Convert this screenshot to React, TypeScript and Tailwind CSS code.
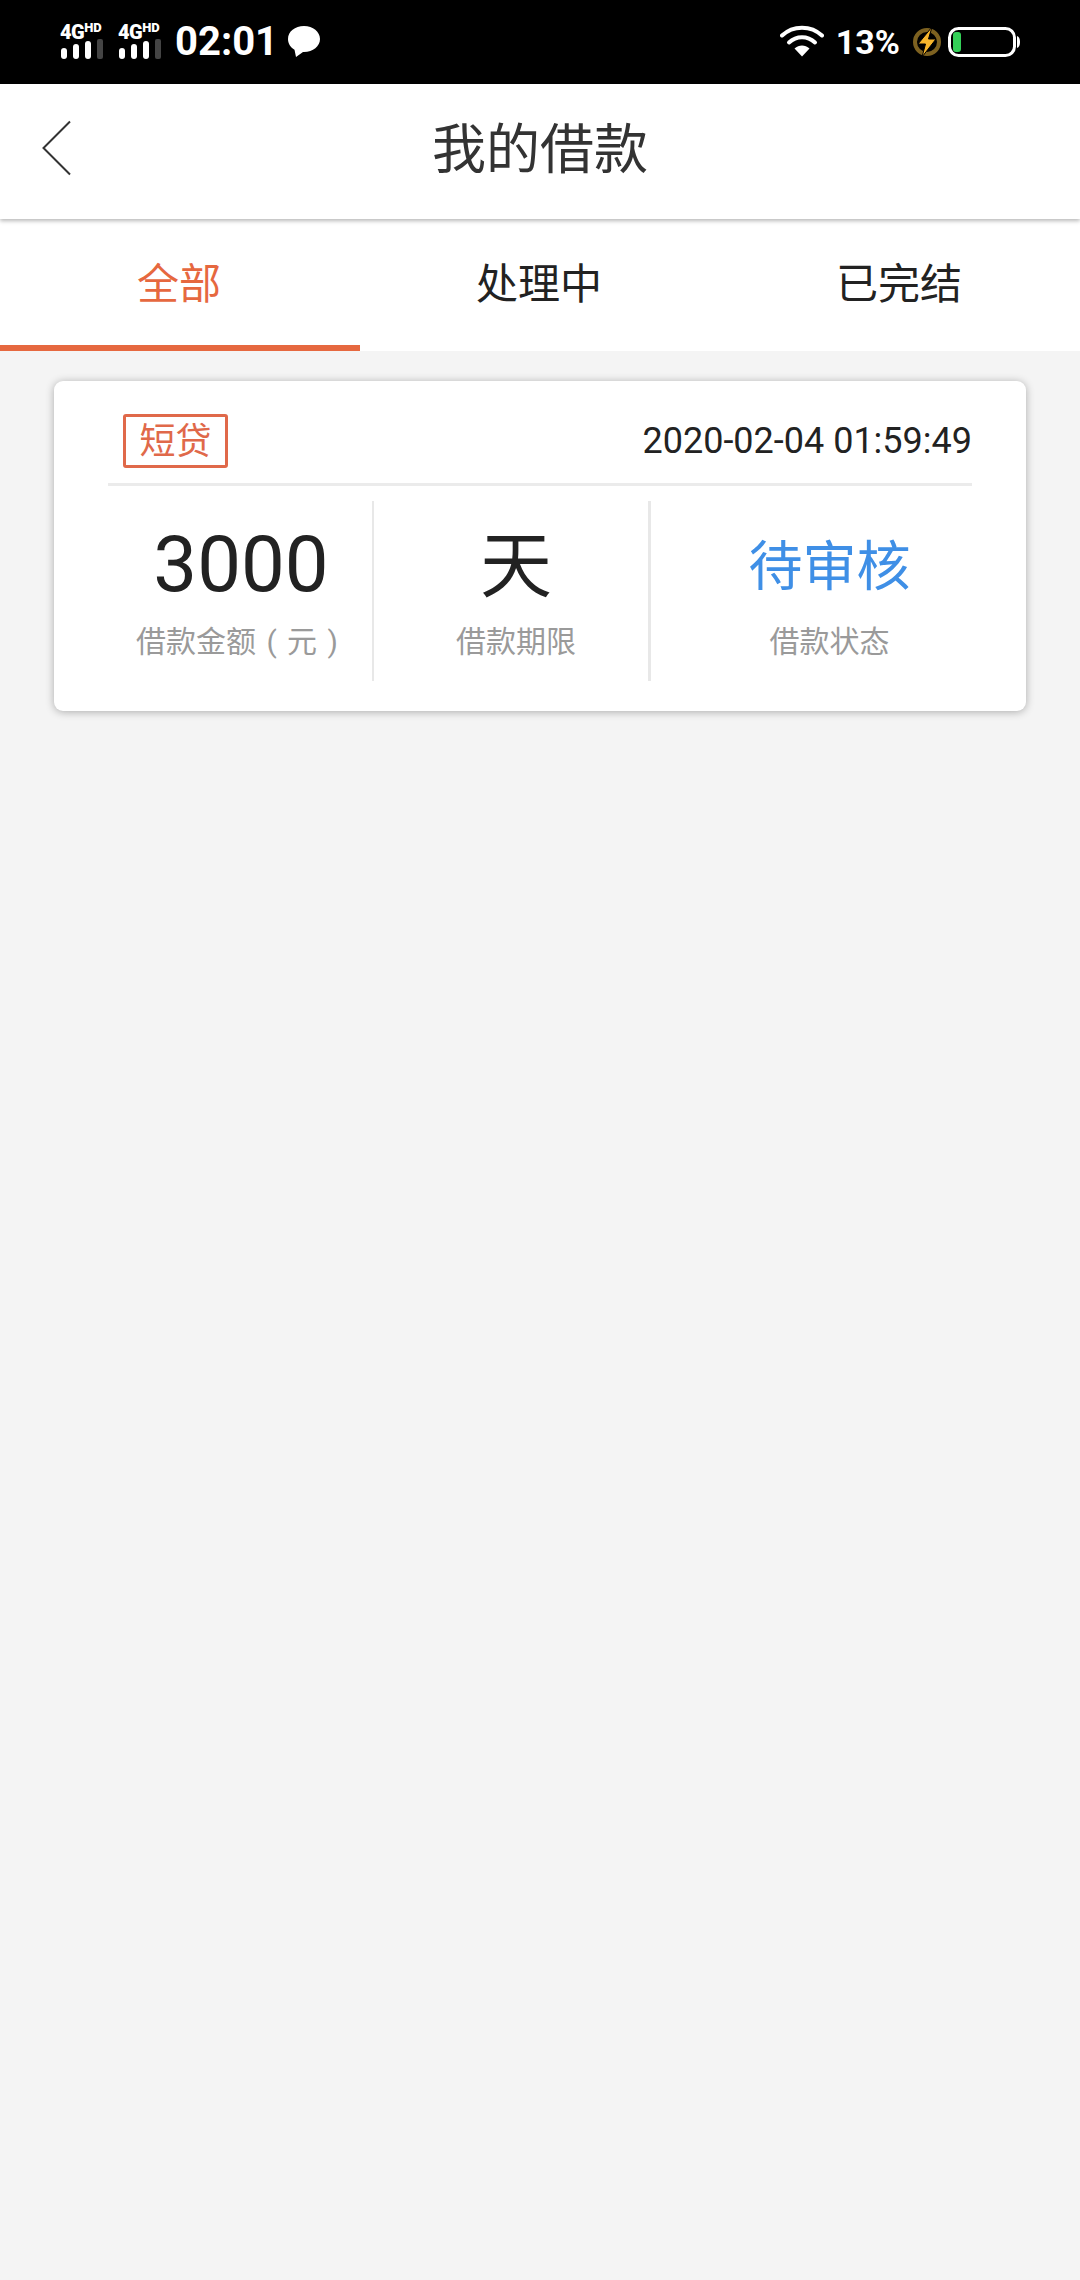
import React from "react";

const FONT = "font-['Roboto','Noto_Sans_CJK_SC',sans-serif]";

function Net() {
  return (
    <div className="flex flex-col w-[46px] h-[36px]">
      <div className="flex items-start h-[16px] font-['Roboto',sans-serif] font-black text-white leading-none">
        <span className="text-[20px] leading-[16px] tracking-[-0.5px]">4G</span>
        <span className="text-[13px] leading-[10px] mt-[-1px]">HD</span>
      </div>
      <svg width="46" height="20" viewBox="0 0 46 20" className="block mt-[-1px]">
        <rect x="1" y="9" width="6" height="11" rx="3" fill="#fff" />
        <rect x="13" y="5" width="6" height="15" rx="3" fill="#fff" />
        <rect x="25" y="2" width="6" height="18" rx="3" fill="#fff" />
        <rect x="37" y="0" width="6" height="20" rx="2" fill="#444" />
      </svg>
    </div>
  );
}

function StatusBar() {
  return (
    <div className="flex items-center justify-between h-[84px] bg-black pl-[60px] pr-[60px] font-['Roboto',sans-serif] text-white">
      <div className="flex items-center">
        <Net />
        <div className="ml-[12px]"><Net /></div>
        <span className="ml-[11px] text-[40px] leading-[44px] font-bold">02:01</span>
        <svg width="34" height="33" viewBox="0 0 34 33" className="ml-[9px] mt-[-2px]">
          <path d="M17 1C8 1 1 6.500 1 14c0 4.500 2.500 8.300 6.500 10.700L9 32l7-5.100c.4 0 .7.100 1 .100 9 0 16-5.700 16-13S26 1 17 1z" fill="#fff" />
        </svg>
      </div>
      <div className="flex items-center">
        <svg width="44" height="32" viewBox="0 0 44 32" className="mt-[-2px]">
          <g fill="none" stroke="#fff" strokeWidth="4" strokeLinecap="round">
            <path d="M2 10.500C13 0 31 0 42 10.500" />
            <path d="M9 17.500c7.500-7 18.500-7 26 0" />
          </g>
          <path d="M14.500 23.500c4.500-4 10.500-4 15 0L22 31.500z" fill="#fff" />
        </svg>
        <span className="ml-[12px] text-[34px] leading-[40px] font-bold">13%</span>
        <svg width="30" height="30" viewBox="0 0 30 30" className="ml-[12px]">
          <circle cx="15" cy="15" r="12" fill="none" stroke="#7d6120" strokeWidth="4" />
          <path d="M20 0 6 17h7.500L10 30 24 12h-7.500z" fill="#f7b52c" stroke="#000" strokeWidth="1" />
        </svg>
        <svg width="72" height="30" viewBox="0 0 72 30" className="ml-[6px]">
          <rect x="1.500" y="1.500" width="65" height="27" rx="9" fill="none" stroke="#fff" strokeWidth="3" />
          <rect x="5" y="5" width="8" height="20" rx="3" fill="#34d058" />
          <path d="M69 9c2 .5 3 3 3 6s-1 5.500-3 6z" fill="#fff" />
        </svg>
      </div>
    </div>
  );
}

function Stat({ value, label, valueClass, labelClass, boxClass }: { value: string; label: string; valueClass: string; labelClass?: string; boxClass: string }) {
  return (
    <div className={`flex flex-col items-center h-[180px] ${boxClass}`}>
      <div className={`h-[92px] mt-[16px] flex items-center leading-none ${valueClass}`}>{value}</div>
      <div className={`mt-[13px] text-[30px] leading-[40px] text-[#9a9a9a] whitespace-nowrap ${labelClass ?? ""}`}>{label}</div>
    </div>
  );
}

export default function App() {
  return (
    <div className={`w-[1080px] h-[2280px] bg-[#f4f4f4] overflow-hidden ${FONT}`}>
      <StatusBar />
      <header className="relative z-10 flex items-center justify-center h-[135px] bg-white shadow-[0_2px_4px_rgba(0,0,0,0.28)]">
        <svg width="32" height="56" viewBox="0 0 32 56" className="absolute left-[41px] top-[36px]">
          <path d="M29 1.500 2.500 28 29 54.500" fill="none" stroke="#333" strokeWidth="2" />
        </svg>
        <h1 className="text-[54px] leading-[70px] text-[#333] font-normal mt-[-2px]">我的借款</h1>
      </header>
      <nav className="grid grid-cols-3 h-[132px] bg-white text-[42px] text-[#222]">
        <div className="flex items-center justify-center border-b-[6px] border-[#e6683f] text-[#e6683f] pt-[4px] pr-[2px]">全部</div>
        <div className="flex items-center justify-center pb-[2px] pr-[2px]">处理中</div>
        <div className="flex items-center justify-center pb-[2px] pr-[2px]">已完结</div>
      </nav>
      <section className="mx-[54px] mt-[30px] h-[330px] rounded-[9px] bg-white px-[54px] shadow-[0_1px_8px_rgba(0,0,0,0.3)]">
        <div className="flex items-center justify-between h-[105px] pt-[33px] pb-[15px] border-b-[3px] border-[#ebebeb]">
          <span className="ml-[15px] flex items-center justify-center w-[105px] h-[54px] rounded-[3px] border-[3px] border-[#e0694a] text-[36px] text-[#e0694a] leading-none pt-[2px]">短贷</span>
          <span className="text-[36px] leading-[44px] text-[#222]">2020-02-04 01:59:49</span>
        </div>
        <div className="flex mt-[15px]">
          <Stat value="3000" label="借款金额 ( 元 )" valueClass="text-[78px] text-[#222] pt-[4px] ml-[4px]" labelClass="[word-spacing:3px] mr-[4px]" boxClass="w-[266px] pr-[2px] border-r-[2px] border-[#e8e8e8]" />
          <Stat value="天" label="借款期限" valueClass="text-[72px] text-[#222] pt-[8px]" boxClass="w-[277px] pl-[10px] border-r-[3px] border-[#e8e8e8]" />
          <Stat value="待审核" label="借款状态" valueClass="text-[54px] text-[#3f8fe6] pt-[10px]" boxClass="w-[321px] pl-[36px]" />
        </div>
      </section>
    </div>
  );
}
